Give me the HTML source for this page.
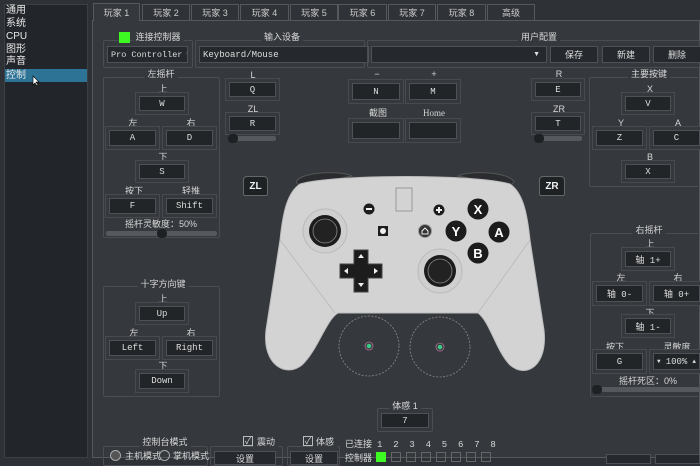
<!DOCTYPE html>
<html><head><meta charset="utf-8"><style>
*{margin:0;padding:0;box-sizing:border-box}
body{width:700px;height:458px;overflow:hidden;background:#2e3135;font-family:"Liberation Sans","Noto Sans CJK SC",sans-serif;color:#d8d8d8;position:relative}
.a{position:absolute}
.t{position:absolute;font-size:9px;line-height:10px;transform:translateX(-50%);white-space:nowrap;color:#d6d6d6;background:#35383d;padding:0 3px}
.g{position:absolute;border:1px solid #4a4d52;border-radius:2px}
.k{position:absolute;background:#222528;border:1px solid #4e5156;box-shadow:0 0 0 3px #35383d,0 0 0 4px #474a4f;font-family:"Liberation Mono","Noto Sans CJK SC",monospace;font-size:9px;color:#ddd;display:flex;align-items:center;justify-content:center;white-space:nowrap}
.btn{position:absolute;background:#25282c;border:1px solid #4e5156;font-size:9px;color:#ddd;display:flex;align-items:center;justify-content:center;white-space:nowrap;overflow:hidden}
.tab{position:absolute;top:4px;height:16px;border:1px solid #55585d;border-bottom:none;background:#2f3236;font-size:9px;display:flex;align-items:center;justify-content:center;color:#ccc}
.sl{position:absolute;height:5px;background:#55585d;border-radius:2px}
.hd{position:absolute;width:10px;height:9px;border-radius:4px;background:#1e2124;top:-2px}
.it{position:absolute;left:6px;font-size:10px;line-height:12px;color:#e8e8e8}
</style></head><body>
<!-- sidebar -->
<div class="a" style="left:4px;top:4px;width:84px;height:454px;background:#222529;border:1px solid #3c3f44"></div>
<div class="it" style="top:5px">通用</div>
<div class="it" style="top:18px">系统</div>
<div class="it" style="top:31px">CPU</div>
<div class="it" style="top:44px">图形</div>
<div class="it" style="top:56px">声音</div>
<div class="a" style="left:5px;top:69px;width:82px;height:13px;background:#2c7396"></div>
<div class="it" style="top:70px">控制</div>
<svg class="a" style="left:32px;top:75px" width="8" height="12"><path d="M1 1 L1 10 L3 8 L5 11 L6 10 L4 7 L7 7 Z" fill="#fff" stroke="#000" stroke-width=".6"/></svg>
<!-- main panel -->
<div class="a" style="left:92px;top:20px;width:608px;height:438px;background:#35383d;border:1px solid #55585d"></div>
<div class="tab" style="left:93px;width:47px;top:3px;height:18px;background:#35383d">玩家 1</div>
<div class="tab" style="left:142px;width:48px">玩家 2</div>
<div class="tab" style="left:191px;width:48px">玩家 3</div>
<div class="tab" style="left:240px;width:49px">玩家 4</div>
<div class="tab" style="left:290px;width:48px">玩家 5</div>
<div class="tab" style="left:338px;width:49px">玩家 6</div>
<div class="tab" style="left:388px;width:48px">玩家 7</div>
<div class="tab" style="left:437px;width:49px">玩家 8</div>
<div class="tab" style="left:487px;width:48px">高级</div>

<!-- top row -->
<div class="g" style="left:103px;top:40px;width:90px;height:28px"></div>
<div class="a" style="left:119px;top:32px;width:11px;height:11px;background:#3dfa22"></div>
<div class="t" style="left:158px;top:32px">连接控制器</div>
<div class="btn" style="left:107px;top:46px;width:81px;height:17px;font-family:'Liberation Mono',monospace;font-size:8.5px;justify-content:flex-start;padding-left:3px">Pro Controller<span style="margin-left:4px;font-size:6px">▼</span></div>
<div class="g" style="left:195px;top:40px;width:170px;height:28px"></div>
<div class="t" style="left:282px;top:32px">输入设备</div>
<div class="btn" style="left:199px;top:46px;width:170px;height:17px;font-family:'Liberation Mono',monospace;justify-content:flex-start;padding-left:3px">Keyboard/Mouse</div>
<div class="g" style="left:367px;top:40px;width:333px;height:28px"></div>
<div class="t" style="left:539px;top:32px">用户配置</div>
<div class="btn" style="left:371px;top:46px;width:176px;height:17px;justify-content:flex-end;padding-right:6px;font-size:7px">▼</div>
<div class="btn" style="left:550px;top:46px;width:48px;height:17px">保存</div>
<div class="btn" style="left:602px;top:46px;width:48px;height:17px">新建</div>
<div class="btn" style="left:653px;top:46px;width:48px;height:17px">删除</div>

<!-- left stick -->
<div class="g" style="left:103px;top:77px;width:117px;height:161px"></div>
<div class="t" style="left:161px;top:69px">左摇杆</div>
<div class="t" style="left:163px;top:84px">上</div><div class="k" style="left:139px;top:96px;width:46px;height:15px">W</div>
<div class="t" style="left:133px;top:118px">左</div><div class="t" style="left:191px;top:118px">右</div>
<div class="k" style="left:109px;top:130px;width:47px;height:16px">A</div>
<div class="k" style="left:166px;top:130px;width:47px;height:16px">D</div>
<div class="t" style="left:163px;top:152px">下</div><div class="k" style="left:139px;top:164px;width:46px;height:15px">S</div>
<div class="t" style="left:134px;top:186px">按下</div><div class="t" style="left:191px;top:186px">轻推</div>
<div class="k" style="left:109px;top:198px;width:47px;height:16px">F</div>
<div class="k" style="left:166px;top:198px;width:47px;height:16px">Shift</div>
<div class="t" style="left:161px;top:219px">摇杆灵敏度：50%</div>
<div class="sl" style="left:106px;top:231px;width:111px"><div class="hd" style="left:51px"></div></div>

<!-- L -->
<div class="t" style="left:253px;top:70px">L</div>
<div class="k" style="left:229px;top:82px;width:47px;height:15px">Q</div>
<div class="t" style="left:253px;top:104px">ZL</div>
<div class="k" style="left:229px;top:116px;width:47px;height:15px">R</div>
<div class="sl" style="left:228px;top:136px;width:48px"><div class="hd" style="left:0"></div></div>

<!-- -/+ -->
<div class="t" style="left:377px;top:69px">−</div>
<div class="k" style="left:352px;top:83px;width:48px;height:17px">N</div>
<div class="t" style="left:434px;top:69px">+</div>
<div class="k" style="left:409px;top:83px;width:48px;height:17px">M</div>
<div class="t" style="left:378px;top:108px">截图</div>
<div class="k" style="left:352px;top:122px;width:48px;height:17px"></div>
<div class="t" style="left:434px;top:108px;font-family:'Liberation Serif',serif">Home</div>
<div class="k" style="left:409px;top:122px;width:48px;height:17px"></div>

<!-- R -->
<div class="t" style="left:559px;top:69px">R</div>
<div class="k" style="left:535px;top:82px;width:46px;height:15px">E</div>
<div class="t" style="left:559px;top:104px">ZR</div>
<div class="k" style="left:535px;top:116px;width:46px;height:15px">T</div>
<div class="sl" style="left:534px;top:136px;width:48px"><div class="hd" style="left:0"></div></div>

<!-- main buttons -->
<div class="g" style="left:589px;top:77px;width:112px;height:110px"></div>
<div class="t" style="left:649px;top:69px">主要按键</div>
<div class="t" style="left:650px;top:84px">X</div><div class="k" style="left:625px;top:96px;width:46px;height:15px">V</div>
<div class="t" style="left:621px;top:118px">Y</div><div class="t" style="left:678px;top:118px">A</div>
<div class="k" style="left:596px;top:130px;width:47px;height:16px">Z</div>
<div class="k" style="left:653px;top:130px;width:47px;height:16px">C</div>
<div class="t" style="left:650px;top:152px">B</div><div class="k" style="left:625px;top:164px;width:46px;height:15px">X</div>

<!-- right stick -->
<div class="g" style="left:590px;top:233px;width:111px;height:164px"></div>
<div class="t" style="left:649px;top:225px">右摇杆</div>
<div class="t" style="left:650px;top:239px">上</div><div class="k" style="left:625px;top:251px;width:46px;height:16px">轴 1+</div>
<div class="t" style="left:621px;top:273px">左</div><div class="t" style="left:678px;top:273px">右</div>
<div class="k" style="left:596px;top:285px;width:47px;height:17px">轴 0-</div>
<div class="k" style="left:653px;top:285px;width:47px;height:17px">轴 0+</div>
<div class="t" style="left:650px;top:308px">下</div><div class="k" style="left:625px;top:318px;width:46px;height:16px">轴 1-</div>
<div class="t" style="left:615px;top:342px">按下</div><div class="t" style="left:677px;top:342px">灵敏度</div>
<div class="k" style="left:596px;top:353px;width:47px;height:17px">G</div>
<div class="k" style="left:653px;top:353px;width:47px;height:17px;justify-content:space-between;padding:0 3px"><span style="font-size:6px">▼</span>100%<span style="font-size:6px">▲</span></div>
<div class="t" style="left:648px;top:376px">摇杆死区：0%</div>
<div class="sl" style="left:592px;top:387px;width:108px"><div class="hd" style="left:0"></div></div>

<!-- dpad group -->
<div class="g" style="left:103px;top:286px;width:117px;height:111px"></div>
<div class="t" style="left:163px;top:279px">十字方向键</div>
<div class="t" style="left:163px;top:294px">上</div><div class="k" style="left:139px;top:306px;width:46px;height:15px">Up</div>
<div class="t" style="left:134px;top:328px">左</div><div class="t" style="left:191px;top:328px">右</div>
<div class="k" style="left:109px;top:340px;width:47px;height:16px">Left</div>
<div class="k" style="left:166px;top:340px;width:47px;height:16px">Right</div>
<div class="t" style="left:163px;top:361px">下</div><div class="k" style="left:139px;top:373px;width:46px;height:16px">Down</div>

<!-- ZL ZR -->
<div class="a" style="left:243px;top:176px;width:25px;height:20px;background:#1f2225;border:1px solid #666;border-radius:4px 4px 2px 2px;font-size:10px;font-weight:bold;color:#eee;display:flex;align-items:center;justify-content:center">ZL</div>
<div class="a" style="left:539px;top:176px;width:26px;height:20px;background:#1f2225;border:1px solid #666;border-radius:4px 4px 2px 2px;font-size:10px;font-weight:bold;color:#eee;display:flex;align-items:center;justify-content:center">ZR</div>

<!-- controller -->
<svg class="a" style="left:0;top:0" width="700" height="458">
<path d="M296 182 C300 172 340 170 352 176 L300 186 Z" fill="#2a2c2f" stroke="#555" stroke-width="1"/>
<path d="M514 182 C510 172 470 170 458 176 L510 186 Z" fill="#2a2c2f" stroke="#555" stroke-width="1"/>
<path d="M300 184 C335 174 475 174 510 184 C522 192 527 210 530 240 L544 330 C548 366 526 379 510 365 C496 351 490 322 478 313 L338 313 C326 320 318 350 302 365 C286 378 262 365 266 330 L280 240 C283 210 288 192 300 184 Z" fill="#d3d3d3" stroke="#bdbdbd"/>
<path d="M280 240 L335 313 M530 240 L478 313" stroke="#b8b8b8" stroke-width="0.8" fill="none"/>
<rect x="396" y="188" width="16" height="23" fill="none" stroke="#999"/>
<circle cx="325" cy="231" r="22" fill="#cfcfcf" stroke="#bbb"/>
<circle cx="325" cy="231" r="16" fill="#1c1c1c"/>
<circle cx="325" cy="231" r="12" fill="#222" stroke="#888" stroke-width="0.8"/>
<circle cx="440" cy="271" r="22" fill="#cfcfcf" stroke="#bbb"/>
<circle cx="440" cy="271" r="16" fill="#1c1c1c"/>
<circle cx="440" cy="271" r="12" fill="#222" stroke="#888" stroke-width="0.8"/>
<path d="M354 250 h14 v14 h14 v14 h-14 v14 h-14 v-14 h-14 v-14 h14 Z" fill="#1c1c1c" stroke="#444"/>
<path d="M361 254 l3 4 h-6 Z M361 287 l3 -4 h-6 Z M344 271 l4 -3 v6 Z M378 271 l-4 -3 v6 Z" fill="#eee"/>
<circle cx="369" cy="209" r="5.5" fill="#1c1c1c"/><rect x="366" y="208" width="6" height="2" fill="#eee"/>
<circle cx="439" cy="210" r="5.5" fill="#1c1c1c"/><path d="M436 210h6M439 207v6" stroke="#eee" stroke-width="2"/>
<rect x="378" y="226" width="10" height="10" fill="#1c1c1c"/><circle cx="383" cy="231" r="3" fill="#eee"/>
<circle cx="425" cy="231" r="6.5" fill="#333" stroke="#999"/><path d="M422 234v-3l3-3 3 3v3z" fill="none" stroke="#eee" stroke-width="1"/>
<g font-family="Liberation Sans" font-weight="bold" font-size="13" fill="#fff" text-anchor="middle">
<circle cx="478" cy="209" r="10.5" fill="#1c1c1c"/><text x="478" y="214">X</text>
<circle cx="456" cy="231" r="10.5" fill="#1c1c1c"/><text x="456" y="236">Y</text>
<circle cx="499" cy="232" r="10.5" fill="#1c1c1c"/><text x="499" y="237">A</text>
<circle cx="478" cy="253" r="10.5" fill="#1c1c1c"/><text x="478" y="258">B</text>
</g>
<circle cx="369" cy="346" r="30" fill="none" stroke="#8a8a8a" stroke-dasharray="2 1.5" stroke-width="0.8"/>
<circle cx="440" cy="347" r="30" fill="none" stroke="#8a8a8a" stroke-dasharray="2 1.5" stroke-width="0.8"/>
<circle cx="369" cy="346" r="4" fill="none" stroke="#b07090" stroke-width="0.8"/><circle cx="369" cy="346" r="2.3" fill="#3ec88a"/>
<circle cx="440" cy="347" r="4" fill="none" stroke="#b07090" stroke-width="0.8"/><circle cx="440" cy="347" r="2.3" fill="#3ec88a"/>
</svg>

<!-- motion -->
<div class="g" style="left:377px;top:408px;width:56px;height:24px"></div>
<div class="t" style="left:405px;top:401px">体感 1</div>
<div class="k" style="left:381px;top:413px;width:48px;height:15px;box-shadow:none">7</div>

<!-- bottom -->
<div class="g" style="left:103px;top:446px;width:105px;height:20px"></div>
<div class="t" style="left:165px;top:437px">控制台模式</div>
<div class="a" style="left:110px;top:450px;width:11px;height:11px;border-radius:50%;border:1px solid #aaa;background:#555"></div>
<div class="a" style="left:125px;top:449px;font-size:9px">主机模式</div>
<div class="a" style="left:159px;top:450px;width:11px;height:11px;border-radius:50%;border:1px solid #aaa"></div>
<div class="a" style="left:173px;top:449px;font-size:9px">掌机模式</div>
<div class="g" style="left:210px;top:446px;width:73px;height:20px"></div>
<div class="a" style="left:243px;top:436px;width:10px;height:10px;border:1px solid #bbb;background:#35383d;font-size:9px;line-height:8px;text-align:center">✓</div>
<div class="t" style="left:266px;top:437px">震动</div>
<div class="btn" style="left:214px;top:451px;width:62px;height:14px">设置</div>
<div class="g" style="left:287px;top:446px;width:53px;height:20px"></div>
<div class="a" style="left:303px;top:436px;width:10px;height:10px;border:1px solid #bbb;background:#35383d;font-size:9px;line-height:8px;text-align:center">✓</div>
<div class="t" style="left:325px;top:437px">体感</div>
<div class="btn" style="left:290px;top:451px;width:48px;height:14px">设置</div>
<div class="a" style="left:345px;top:439px;font-size:9px;line-height:10px">已连接</div>
<div class="a" style="left:345px;top:451px;font-size:9px">控制器</div>
<div class="a" style="left:377px;top:440px;font-size:9px;font-family:'Liberation Mono',monospace;white-space:pre">1  2  3  4  5  6  7  8</div>
<div class="a" style="left:376px;top:452px;width:10px;height:10px;background:#3dfa22"></div>
<div class="a" style="left:391px;top:452px;width:10px;height:10px;border:1px solid #666"></div>
<div class="a" style="left:406px;top:452px;width:10px;height:10px;border:1px solid #666"></div>
<div class="a" style="left:421px;top:452px;width:10px;height:10px;border:1px solid #666"></div>
<div class="a" style="left:436px;top:452px;width:10px;height:10px;border:1px solid #666"></div>
<div class="a" style="left:451px;top:452px;width:10px;height:10px;border:1px solid #666"></div>
<div class="a" style="left:466px;top:452px;width:10px;height:10px;border:1px solid #666"></div>
<div class="a" style="left:481px;top:452px;width:10px;height:10px;border:1px solid #666"></div>
<div class="btn" style="left:606px;top:454px;width:45px;height:10px"></div>
<div class="btn" style="left:655px;top:454px;width:45px;height:10px"></div>
</body></html>
